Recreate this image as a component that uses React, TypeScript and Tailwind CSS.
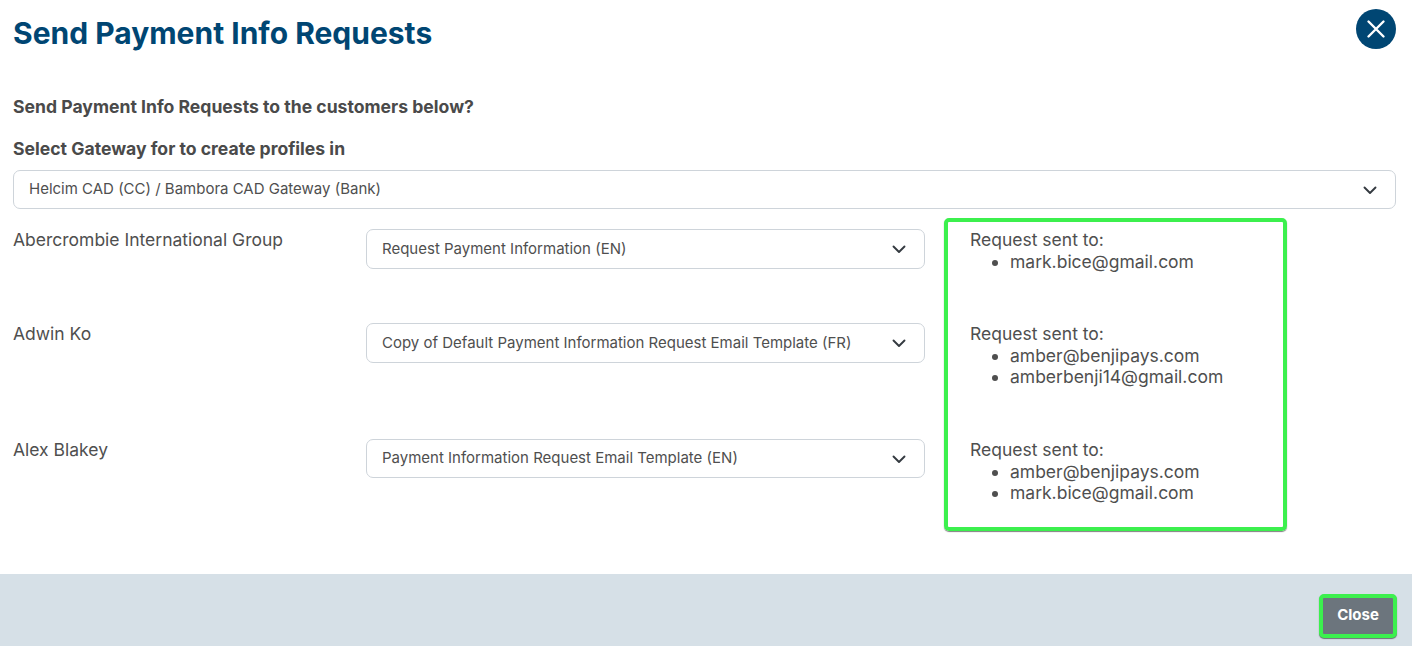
import React from "react";

function Chevron() {
  return (
    <svg width="16" height="16" viewBox="0 0 16 16" fill="none" className="shrink-0">
      <path d="M2.5 5.5 8 11l5.5-5.5" stroke="#343a40" strokeWidth="1.9" strokeLinecap="round" strokeLinejoin="round" />
    </svg>
  );
}

function Select({ text, h = "h-[39px]" }: { text: string; h?: string }) {
  return (
    <div className={`flex ${h} w-full items-center justify-between rounded-[7px] border border-[#ced4da] bg-white pl-[15px] pr-[17px] text-[15px] text-[#4f4f4f]`}>
      <span className="truncate">{text}</span>
      <Chevron />
    </div>
  );
}

const rows = [
  { name: "Abercrombie International Group", tpl: "Request Payment Information (EN)", mails: ["mark.bice@gmail.com"], h: "h-[94px]", sh: "h-[40px]" },
  { name: "Adwin Ko", tpl: "Copy of Default Payment Information Request Email Template (FR)", mails: ["amber@benjipays.com", "amberbenji14@gmail.com"], h: "h-[116px]", sh: "h-[40px]" },
  { name: "Alex Blakey", tpl: "Payment Information Request Email Template (EN)", mails: ["amber@benjipays.com", "mark.bice@gmail.com"], h: "h-[92px]", sh: "h-[39px]" },
];

export default function App() {
  return (
    <div className="flex h-[646px] w-[1412px] flex-col overflow-hidden bg-white font-['Inter',sans-serif] text-[#4f4f4f]">
      <div className="flex h-[574px] flex-col pl-[13px] pr-4">
        <div className="flex items-start justify-between pt-[9px]">
          <h1 className="mt-[3px] text-[30px] font-bold leading-[42px] text-[#004673]">Send Payment Info Requests</h1>
          <button className="flex h-10 w-10 items-center justify-center rounded-full bg-[#004673]">
            <svg width="20" height="20" viewBox="0 0 20 20" fill="none">
              <path d="M2.5 2.5 17.5 17.5M17.5 2.5 2.5 17.5" stroke="#fff" strokeWidth="2.4" strokeLinecap="round" />
            </svg>
          </button>
        </div>
        <p className="mt-[41px] text-[17.6px] font-bold leading-6 text-[#4a4a4a]">Send Payment Info Requests to the customers below?</p>
        <p className="mt-[18px] text-[17.6px] font-bold leading-6 text-[#4a4a4a]">Select Gateway for to create profiles in</p>
        <div className="mt-[9px]">
          <Select text="Helcim CAD (CC) / Bambora CAD Gateway (Bank)" />
        </div>
        <div className="mt-[9px] flex">
          <div className="w-[931px] pt-[11px]">
            {rows.map((r) => (
              <div key={r.name} className={`flex ${r.h}`}>
                <div className="w-[353px] text-[17.5px] leading-[22px] text-[#4f4f4f]">{r.name}</div>
                <div className="w-[559px]">
                  <Select text={r.tpl} h={r.sh} />
                </div>
              </div>
            ))}
          </div>
          <div className="h-[313px] w-[343px] rounded-[5px] border-[4px] border-[#3cf04e] pl-[22px] pt-[7px] text-[17.5px] leading-[21.5px] text-[#4f4f4f] shadow-[0_1px_1px_rgba(0,0,0,0.5)]">
            {rows.map((r) => (
              <div key={r.name} className={r.h}>
                <div>Request sent to:</div>
                <ul className="list-disc pl-[40px]">
                  {r.mails.map((m) => (
                    <li key={m}>{m}</li>
                  ))}
                </ul>
              </div>
            ))}
          </div>
        </div>
      </div>
      <div className="flex h-[72px] items-start justify-end bg-[#d6e0e7] pr-[15px] pt-[20px]">
        <button className="h-[44px] w-[78px] rounded-[5px] border-[4px] border-[#3cf04e] bg-[#6c757d] pb-[2px] text-[15px] font-bold text-white shadow-[0_1px_1px_rgba(0,0,0,0.5)]">Close</button>
      </div>
    </div>
  );
}
